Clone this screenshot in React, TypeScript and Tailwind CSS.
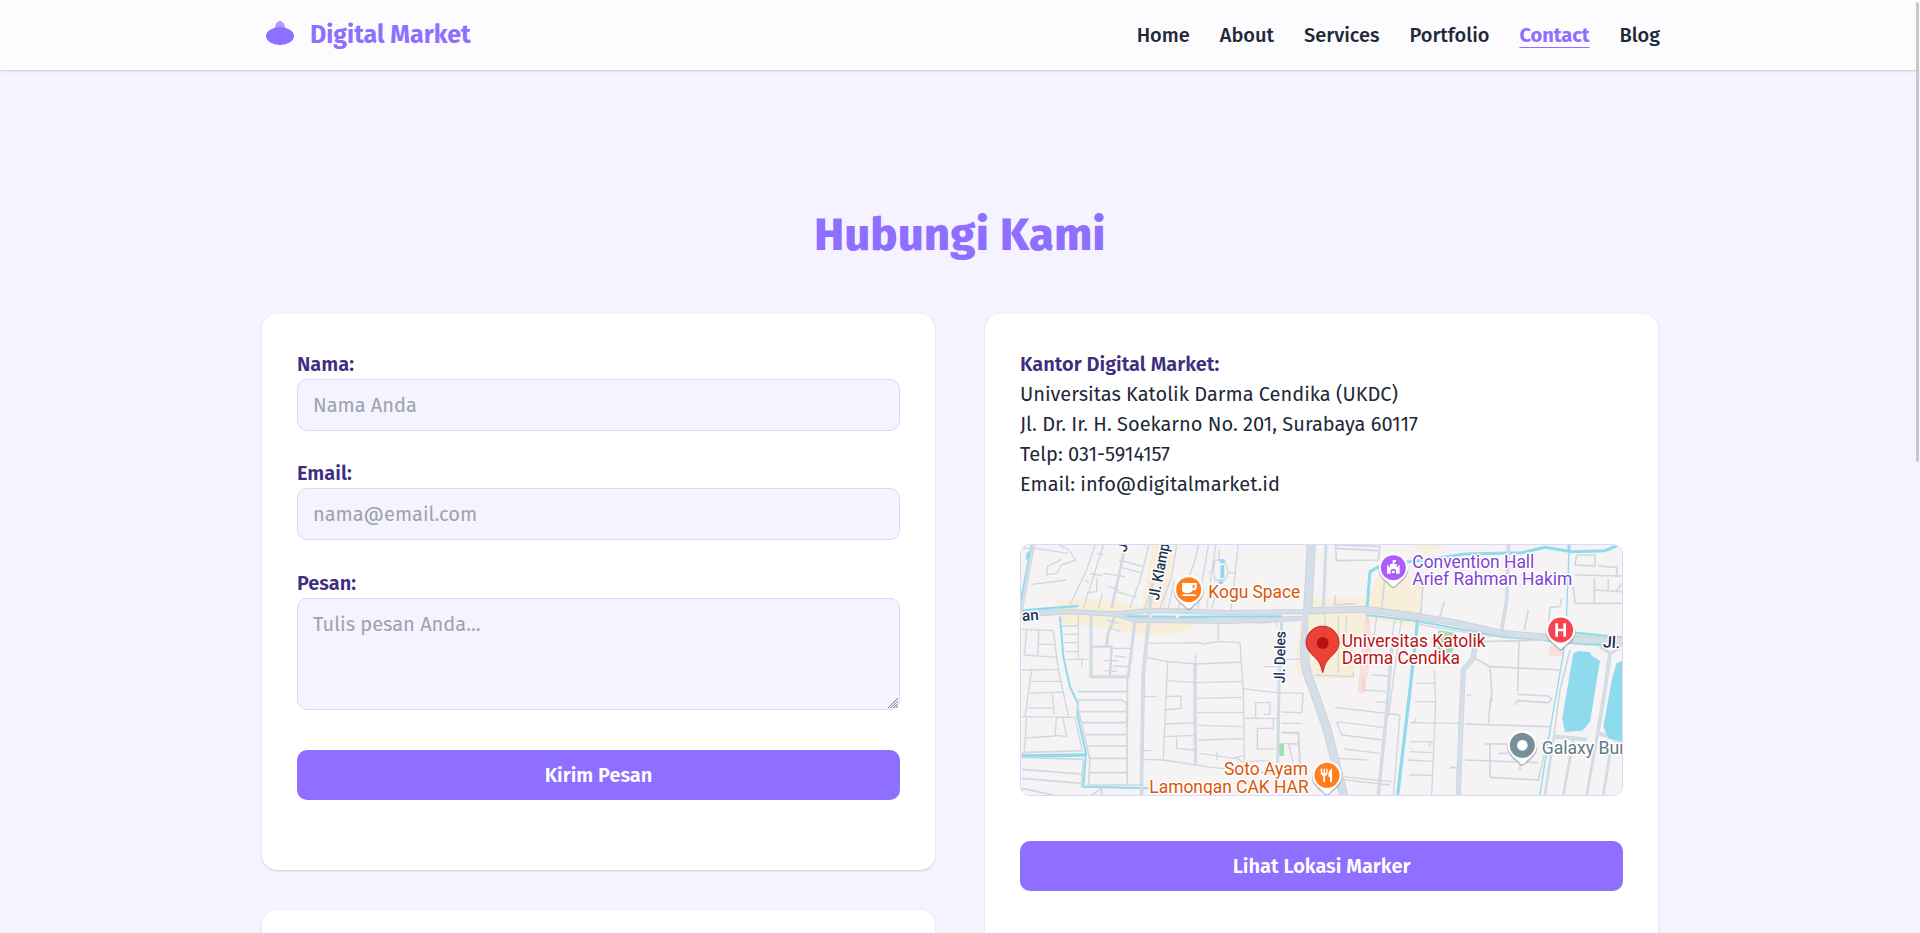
import type { ReactNode } from "react";

const NAV = ["Home", "About", "Services", "Portfolio", "Contact", "Blog"];

function Logo() {
  return (
    <svg className="h-10 w-10" viewBox="0 0 40 40" fill="#8f6fff">
      <ellipse cx="20" cy="21" rx="14" ry="9" />
      <ellipse cx="20" cy="13" rx="4.9" ry="7" opacity="0.7" />
    </svg>
  );
}

function Header() {
  return (
    <header className="relative z-10 h-[70px] shrink-0 bg-[#fcfcff] shadow-[0_1px_3px_rgba(0,0,0,0.12),0_1px_2px_-1px_rgba(0,0,0,0.12)]">
      <div className="mx-auto flex h-full w-[1400px] items-center justify-between">
        <div className="flex items-center gap-2.5">
          <Logo />
          <span className="text-[25px] leading-[35px] font-bold text-[#8f6fff]">Digital Market</span>
        </div>
        <nav className="flex gap-[30px] font-medium">
          {NAV.map((item) =>
            item === "Contact" ? (
              <a key={item} className="font-bold text-[#8f6fff] underline decoration-1 underline-offset-[5px]">
                {item}
              </a>
            ) : (
              <a key={item}>{item}</a>
            ),
          )}
        </nav>
      </div>
    </header>
  );
}

function Card({ className, children }: { className: string; children?: ReactNode }) {
  return (
    <div
      className={`rounded-[15px] bg-white p-[35px] shadow-[0_1px_3px_rgba(0,0,0,0.12),0_1px_2px_-1px_rgba(0,0,0,0.12)] ${className}`}
    >
      {children}
    </div>
  );
}

const field =
  "block w-full rounded-[10px] border border-[#ddd6fe] bg-[#f5f3ff] px-[15px] outline-none placeholder:text-[#9ca3af] placeholder:opacity-100";
const button = "block h-[50px] w-full rounded-[10px] bg-[#8f6fff] text-center font-semibold text-white";

function ContactForm() {
  return (
    <form>
      <label className="block font-semibold text-[#3f2d7f]">Nama:</label>
      <input className={`${field} h-[52px]`} placeholder="Nama Anda" />
      <label className="mt-[27px] block font-semibold text-[#3f2d7f]">Email:</label>
      <input className={`${field} h-[52px]`} placeholder="nama@email.com" />
      <label className="mt-7 block font-semibold text-[#3f2d7f]">Pesan:</label>
      <div className="relative">
        <textarea className={`${field} h-28 resize-none py-2.5`} placeholder="Tulis pesan Anda..." />
        <svg className="absolute right-0.5 bottom-0.5 h-2.5 w-2.5" viewBox="0 0 10 10" stroke="#6b6b76" strokeWidth="0.9">
          <path d="M0 10L10 0M2.7 10L10 2.7M5.4 10L10 5.4M8 10L10 8" />
        </svg>
      </div>
      <button type="button" className={`${button} mt-10`}>
        Kirim Pesan
      </button>
    </form>
  );
}

type Line = { d: string; w: number; c?: string };

const ROAD = "#ced8e1";
const MAIN = "#c8d2dc";
const WATER = "#90daee";

const westLines: Line[] = [
  { d: "M55 15L30 150L10 260", w: 10 },
  { d: "M15 25H60M60 25L160 40M50 133L155 120M160 205L215 90L240 15M205 205L265 15M265 100L330 110M140 58L118 70L98 78L94 104L125 100L140 75L182 60L162 30L132 15", w: 4 },
  { d: "M330 20L290 205", w: 8 },
  { d: "M245 40L265 45M225 102L262 106M245 115V155L215 158M210 120L222 128M280 140L310 150M305 155L365 172M312 60L385 80M318 82L378 98M250 205L262 160M345 205L378 110L402 15M390 205L412 130", w: 4 },
  { d: "M412 130L405 205L385 400L380 690V766", w: 11 },
  { d: "M435 205L470 110L485 15M460 205L478 120M490 205L540 60L550 15M548 205L580 15M590 205L600 170M648 210L670 15M602 15L575 205M580 100L595 90L600 60L630 62L640 98L630 120L600 120L595 90M640 98H664M612 62V30", w: 4 },
  { d: "M300 225L278 285L275 315M360 240L340 410M228 225V410H345", w: 9 },
  { d: "M230 320H290L285 405", w: 7 },
  { d: "M140 258H188M190 225V358M145 283H188M148 308H190M152 335H190M155 358H222M200 358V382M290 325H348M275 240L310 250M285 265L318 275M300 348L335 352M265 362H310M295 378L340 380M265 392L305 394", w: 4 },
  { d: "M20 268L115 272L130 390L160 528M35 270L28 345L125 352M72 270L68 345M72 313H120M20 390L130 388M50 390L30 530M50 424H138M45 460L145 456M112 460L118 525M38 503L112 505M20 530L180 532L202 632M35 530L28 640M125 530L120 588M143 530L155 590L120 586M30 594L120 588", w: 4 },
  { d: "M20 638L202 632M20 652L205 658L200 740M20 688L200 702M20 715L200 730M20 745L120 766", w: 5 },
  { d: "M190 480H320L335 490L337 735M190 480L188 500L225 660L220 740M193 515H332M197 548H334M212 584H334M218 618H335M222 655H335M220 698H336M215 735H385M188 455H340M337 400V560M230 766L260 745V766", w: 5 },
  { d: "M402 310L555 308L565 312L610 305L675 308M390 352L460 365L545 372L680 366M542 340V410M458 365L445 655M455 422L545 428L682 424M380 470H425M450 470L498 468V505L448 510M548 475L680 472M548 518L685 518M448 552L540 548M550 556L683 560M447 590L542 586M485 592V625L540 630M550 600L683 596M552 640L660 655L685 645M385 632H408M385 658L445 660L590 682L770 700M610 250V305M606 635V660M675 308L685 450L688 660M680 446L785 458M720 250L785 245V262M705 248V238M785 458L865 460L860 518L800 516M722 535V488H765V523H748M688 535H786M800 550H858M727 565H775V535M727 565V628L778 626M805 610L855 612M820 610L835 670M748 380H800M800 358H855M660 650L680 665L770 662", w: 4 },
  { d: "M800 578H850L855 670", w: 6 },
  { d: "M540 372V540L542 675", w: 10 },
  { d: "M800 240L792 440L788 670", w: 9 },
  { d: "M20 225L160 215L300 222L400 212L500 213L640 218L860 215L940 210M300 222L360 240L640 244L860 235", w: 16, c: MAIN },
  { d: "M889 10L878 215L868 330Q868 390 892 440L937 570L987 770", w: 27, c: MAIN },
];

const eastLines: Line[] = [
  { d: "M33 15L25 205", w: 9 },
  { d: "M62 165L58 195L125 190M62 15L64 62L190 60L195 20L62 15M66 25L190 32M215 60L200 205M325 120L315 250", w: 5 },
  { d: "M260 230L220 530", w: 4 },
  { d: "M580 15L575 180L560 270", w: 11 },
  { d: "M388 185L375 230M640 210L628 270M740 175L735 200L705 202L700 260", w: 5 },
  { d: "M785 45L780 75L840 78V45H785M780 105L920 108M850 78L905 82V112M838 115V190M775 140L780 190L920 190M838 150L920 155M880 118V152M920 130L905 152", w: 5 },
  { d: "M160 250L150 205M30 215V300M70 225V400M95 230L90 300M185 230L175 310M240 235L230 300M0 405L115 410V395M145 410V450L215 455M172 405L222 408M183 485L215 488M300 250L360 262L530 290", w: 4 },
  { d: "M232 300L215 520L190 765", w: 10 },
  { d: "M60 502L255 525L235 765M65 545L80 585L205 600M65 545L205 562M88 627L195 640M70 655L160 660M80 710L230 725M75 718L225 735M305 430H358M300 485H362L350 765M358 390L362 490M285 548L440 550M285 605H358M345 605V620M285 635L350 638M280 660L350 664M282 705L352 706M300 535V550", w: 4 },
  { d: "M480 310L475 355L445 390L438 550L430 765", w: 16 },
  { d: "M490 305L705 300M480 355L525 380L740 390M525 380L530 450L520 550M530 450V485H522M612 300L608 455M608 463L700 468L710 478L700 488L608 482L598 495M450 552L705 560M455 465H468M510 612H590M525 612V712L670 720L700 590M450 660L670 668M550 640H580M615 670V690M405 683H425", w: 5 },
  { d: "M765 330L735 450L715 600L690 765", w: 5 },
  { d: "M885 340L870 450L848 580M720 590L815 598M850 580L885 590L920 610", w: 11 },
  { d: "M885 340L915 325M885 340L855 320M848 580L815 765M775 600L745 765M890 610L865 765M715 600L690 765", w: 8 },
  { d: "M-10 212L150 208L280 225L420 248L560 280L700 292L800 300L925 302", w: 21, c: MAIN },
];

function Lines({ items }: { items: Line[] }) {
  return (
    <g fill="none" strokeLinejoin="round">
      {items.map(({ d, w, c }) => (
        <path key={d} d={d} stroke={c ?? ROAD} strokeWidth={w} />
      ))}
      {items
        .filter(({ w }) => w >= 8)
        .map(({ d, w }) => (
          <path key={d} d={d} stroke="#d5dee6" strokeWidth={w - 5} />
        ))}
    </g>
  );
}

function Pin({ x, y, color, children }: { x: number; y: number; color: string; children: ReactNode }) {
  return (
    <g transform={`translate(${x} ${y})`}>
      <path
        d="M-45 2a45 45 0 1 1 90 0c0 20-15 34-27 43L5 57q-5 4-10 0L-18 45C-30 36-45 22-45 2Z"
        fill="#6b7280"
        opacity=".45"
        transform="translate(0 3)"
      />
      <path d="M-44 0a44 44 0 1 1 88 0c0 20-15 34-27 43L5 55q-5 4-10 0L-17 43C-29 34-44 20-44 0Z" fill="#fff" />
      <circle r="37.5" fill={color} />
      {children}
    </g>
  );
}

type LabelProps = {
  x: number;
  y: number;
  w?: number;
  fill: string;
  size?: number;
  rotate?: number;
  weight?: number;
  children: string;
};

function Label({ x, y, w, fill, size = 54, rotate, weight = 400, children }: LabelProps) {
  return (
    <text
      x={x}
      y={y}
      fill={fill}
      fontSize={size}
      fontWeight={weight}
      textLength={w}
      lengthAdjust="spacingAndGlyphs"
      transform={rotate ? `rotate(${rotate} ${x} ${y})` : undefined}
      stroke="#fff"
      strokeWidth="9"
      strokeLinejoin="round"
      paintOrder="stroke"
      className="font-['Roboto',sans-serif]"
    >
      {children}
    </text>
  );
}

function CampusMap() {
  return (
    <svg className="block h-full w-full" viewBox="0 0 601 250">
      <rect width="601" height="250" fill="#f5f3f4" />
      <g transform="translate(-6 -5) scale(.33333)">
        <path
          d="M412 15H485L450 205H380ZM125 180L200 178L290 180L400 205V250H550L520 272L430 288L300 270L135 250ZM895 175H930V410H860L840 390L855 240Z"
          fill="#f8efda"
        />
        <rect x="792" y="610" width="15" height="38" fill="#a0dfb4" />
        <path d="M52 15L35 100L15 200" fill="none" stroke={WATER} strokeWidth="9" />
        <path d="M35 38L50 30L45 55L32 60Z" fill={WATER} />
        <path d="M20 212L190 198" fill="none" stroke={WATER} strokeWidth="8" />
        <path d="M135 230L145 350L165 440L188 490V530L213 640L205 740L400 745" fill="none" stroke={WATER} strokeWidth="6" />
        <path d="M20 648L212 645" fill="none" stroke={WATER} strokeWidth="10" />
        <Lines items={westLines} />
        <path d="M613 58h16v12h-12zM616 78l12-4v40h-12zM610 122h14v10h-14z" fill={WATER} />
        <path d="M335 229H400M412 230H482M492 231L800 229" fill="none" stroke={WATER} strokeWidth="7" />
      </g>
      <g transform="translate(294 -5) scale(.33333)">
        <path
          d="M15 175H155L190 110H290L325 125L315 250L300 262L150 235V290H120V415H5L-20 300V225H15ZM290 15H390L330 45Z"
          fill="#f8efda"
        />
        <path d="M148 235H165L170 330L150 460H128ZM702 318H745V348H702Z" fill="#fbdfdc" />
        <path d="M370 270L425 280L410 345L368 330Z" fill="#9fdeb3" />
        <path
          d="M155 218L165 95L200 75L330 60L450 42L620 38L690 22L770 35L870 32L910 15M762 15V35"
          fill="none"
          stroke={WATER}
          strokeWidth="9"
        />
        <path d="M762 35L755 220L745 340L700 600L675 765" fill="none" stroke={WATER} strokeWidth="4" />
        <path d="M308 240L285 450L248 765" fill="none" stroke={WATER} strokeWidth="10" />
        <path d="M152 225L300 242L420 265L560 290L700 302L800 312L920 318" fill="none" stroke={WATER} strokeWidth="6" />
        <path d="M780 288L920 296" fill="none" stroke="#c4ead0" strokeWidth="16" />
        <path d="M770 277L920 292" fill="none" stroke={WATER} strokeWidth="6" />
        <Lines items={eastLines} />
        <path d="M775 340L790 333L825 336L830 347L855 362L825 545L802 572L750 576L742 535Z" fill={WATER} />
        <path d="M922 362L905 370L890 420L865 560L880 595L922 605Z" fill={WATER} />
      </g>
      <g transform="translate(-6 -5) scale(.33333)">
        <Label x={333} y={38} fill="#1d3557" size={46} weight={500} rotate={-76}>
          J
        </Label>
        <Label x={431} y={182} w={172} fill="#1d3557" size={46} weight={500} rotate={-79}>
          Jl. Klamp
        </Label>
        <Label x={22} y={243} fill="#1d3557" size={46} weight={500} rotate={-4}>
          an
        </Label>
        <Label x={809} y={430} w={156} fill="#1d3557" size={45} weight={500} rotate={-89}>
          Jl. Deles
        </Label>
        <Label x={580} y={175} w={276} fill="#d9580a">
          Kogu Space
        </Label>
        <Label x={627} y={706} w={252} fill="#d9580a">
          Soto Ayam
        </Label>
        <Label x={403} y={758} w={478} fill="#d9580a">
          Lamongan CAK HAR
        </Label>
        <Pin x={521} y={149} color="#ff7f1f">
          <path
            d="M-20-20H24V-8Q24 2 14 2H12Q8 10 0 10H-8Q-20 10-20-2ZM12-14V-4H15Q18-4 18-8V-14ZM-19 14H21V19H-19Z"
            fill="#fff"
            fillRule="evenodd"
          />
        </Pin>
      </g>
      <g transform="translate(294 -5) scale(.33333)">
        <Label x={292} y={83} w={366} fill="#8044d4">
          Convention Hall
        </Label>
        <Label x={292} y={135} w={480} fill="#8044d4">
          Arief Rahman Hakim
        </Label>
        <Label x={80} y={321} w={432} fill="#b91416">
          Universitas Katolik
        </Label>
        <Label x={80} y={373} w={355} fill="#b91416">
          Darma Cendika
        </Label>
        <Label x={863} y={322} fill="#1d2f4b" size={48} weight={500} rotate={3}>
          Jl.
        </Label>
        <Label x={680} y={641} w={262} fill="#5f7b88">
          Galaxy Bun
        </Label>
        <Pin x={235} y={83} color="#ac5cfb">
          <path d="M-19 18V-7H-14V-2H-10V-11H-2V-23H8V-16H3V-11H10V-2H14V-7H19V18H8V8Q7 3 0 3T-8 8V18ZM-4 9H4V16H-4Z" fill="#fff" />
        </Pin>
        <Pin x={737} y={270} color="#fa4450">
          <path d="M-16-20H-8V-4H8V-20H16V20H8V4H-8V20H-16Z" fill="#fff" />
        </Pin>
        <Pin x={622} y={616} color="#768f9b">
          <circle r="16" fill="#fff" />
        </Pin>
        <Pin x={36} y={706} color="#ff7f1f">
          <path
            d="M-19-20V-8Q-19 0-11 2V20H-6V2Q2 0 2-8V-20H-2V-8H-6V-20H-10V-8H-14V-20ZM15-20Q4-16 4-2V4H9V20H15Z"
            fill="#fff"
          />
        </Pin>
        <path
          d="M23 398L18 380C10 350-27 340-27 308A49 49 0 0 1 72 308C72 340 36 350 28 380Z"
          fill="#ea4335"
          stroke="#c5221f"
          strokeWidth="3"
        />
        <circle cx="23" cy="309" r="18" fill="#b31412" />
      </g>
    </svg>
  );
}

export default function App() {
  return (
    <div className="relative flex h-[933px] w-full flex-col overflow-hidden bg-[#f5f3ff] font-['Fira_Sans','Open_Sans',sans-serif] text-[20px] leading-[30px] text-[#1f2937]">
      <Header />
      <main className="mx-auto w-[1396px] pt-[131px]">
        <h1 className="text-center text-[45px] leading-[68px] font-extrabold tracking-[0.45px] text-[#8f6fff]">
          Hubungi Kami
        </h1>
        <div className="mt-[45px] grid grid-cols-2 gap-[50px]">
          <div className="flex flex-col gap-10">
            <Card className="h-[556px]">
              <ContactForm />
            </Card>
            <Card className="h-[200px]" />
          </div>
          <Card className="h-[796px]">
            <p className="font-semibold text-[#3f2d7f]">Kantor Digital Market:</p>
            <p>Universitas Katolik Darma Cendika (UKDC)</p>
            <p>Jl. Dr. Ir. H. Soekarno No. 201, Surabaya 60117</p>
            <p>Telp: 031-5914157</p>
            <p>Email: info@digitalmarket.id</p>
            <div className="mt-[45px] h-[252px] overflow-hidden rounded-[10px] border border-[#ddd6fe]">
              <CampusMap />
            </div>
            <button type="button" className={`${button} mt-[45px]`}>
              Lihat Lokasi Marker
            </button>
          </Card>
        </div>
      </main>
      <div className="absolute top-0.5 right-px z-20 h-[460px] w-[3px] rounded-full bg-[#c8c8c8]" />
    </div>
  );
}
